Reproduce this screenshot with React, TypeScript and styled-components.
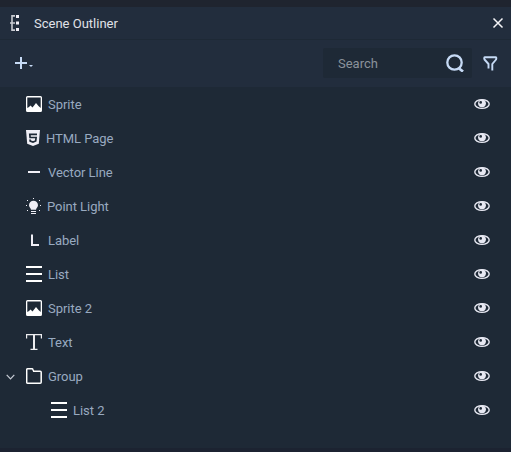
import React from "react";
import styled, { createGlobalStyle } from "styled-components";

const GlobalStyle = createGlobalStyle`
  * { box-sizing: border-box; }
  html, body { margin: 0; padding: 0; background: #1e2936; }
  body, input { font-family: Roboto, sans-serif; font-size: 13px; }
  svg { display: block; flex: none; }
`;

const Panel = styled.main`
  display: flex;
  flex-direction: column;
  width: 511px;
  height: 452px;
  border-top: 7px solid #1f242f;
  border-bottom: 4px solid #1c2331;
  background: #1e2936;
  overflow: hidden;
`;

const TitleBar = styled.header`
  display: flex;
  align-items: center;
  height: 33px;
  padding: 0 7px 0 10px;
  background: #222d3d;
  border-bottom: 1px solid #1e2936;
`;

const Title = styled.h1`
  flex: 1;
  margin: 0 0 0 15px;
  padding-top: 2px;
  font-size: 13px;
  font-weight: 400;
  line-height: 18px;
  color: #e0e2e8;
`;

const Button = styled.button`
  display: flex;
  padding: 0;
  border: 0;
  background: none;
  color: inherit;
`;

const Toolbar = styled.div`
  display: flex;
  align-items: center;
  height: 47px;
  padding: 0 13px 1px 15px;
  background: #222d3d;
  color: #c6daf5;
`;

const SearchBox = styled.label`
  display: flex;
  align-items: center;
  width: 149px;
  height: 30px;
  margin: 0 11px 0 auto;
  padding: 0 8px 0 15px;
  border-radius: 2px;
  background: #1e2936;
`;

const SearchInput = styled.input`
  flex: 1;
  min-width: 0;
  padding: 1px 0 0;
  border: 0;
  outline: 0;
  background: none;
  color: #a5b0bf;
  &::placeholder { color: #8b929b; opacity: 1; }
`;

const List = styled.ul`
  margin: 0;
  padding: 0;
  list-style: none;
`;

const Row = styled.li<{ $depth: number }>`
  display: flex;
  align-items: center;
  height: 34px;
  padding: 0 21px 0 ${(p) => p.$depth * 25}px;
  color: #f0eff6;
`;

const Toggle = styled.span`
  display: flex;
  width: 26px;
  padding: 1px 0 0 6px;
`;

const Name = styled.span<{ $gap: number }>`
  flex: 1;
  margin-left: ${(p) => p.$gap}px;
  padding-top: 2px;
  line-height: 18px;
  letter-spacing: -0.04px;
  color: #99aac0;
`;

type Kind = "image" | "html" | "line" | "light" | "label" | "list" | "text" | "folder";

const glyphs: Record<Kind, React.ReactNode> = {
  image: (
    <path
      fillRule="evenodd"
      fill="#fff"
      d="M1.500 0h13Q16 0 16 1.500v13q0 1.500-1.500 1.500h-13Q0 16 0 14.500v-13Q0 0 1.500 0zM1.300 1.500V12L3 11l1.500-1.500L6.500 11.500 10 7l2.500 3 2.200 2V1.500z"
    />
  ),
  html: (
    <>
      <path fill="currentColor" d="M0 0h14l-1.200 13.800L7 16l-5.800-2.200z" />
      <path fill="none" stroke="#1e2936" strokeWidth="1.700" d="M11 4.300H3.800l.3 3.200h6L9.700 11 7 12l-2.800-1-.2-1.500" />
    </>
  ),
  line: <path fill="currentColor" d="M2 7h12v2H2z" />,
  light: (
    <>
      <path fill="currentColor" d="M7.500 2.700a4.500 4.500 0 0 1 4.500 4.500c0 2-1.700 2.700-2 4.600H5c-.3-1.900-2-2.600-2-4.600a4.500 4.500 0 0 1 4.500-4.500zM5 13h5v1H5zM5 15h5v1H5z" />
      <path fill="currentColor" d="M7 0h1v1H7zM1 2h1v1H1zM13 2h1v1h-1zM0 7h1v1H0zM14 7h1v1h-1zM1 12h1v1H1zM13 12h1v1h-1z" />
    </>
  ),
  label: <path fill="currentColor" d="M5 2.500h2v9.500h6v2H5z" />,
  list: <path fill="#fff" d="M0 0h16v2H0zM0 7h16v2H0zM0 14h16v2H0z" />,
  text: (
    <path
      fill="#ededf0"
      d="M0 0h16v4.500h-1.200V1.300H9V14.800h2.500V16h-7v-1.200H7V1.300H1.200v3.200H0z"
    />
  ),
  folder: (
    <path
      fill="none"
      stroke="#fff"
      strokeWidth="1.500"
      d="M1.700.8H6q.7 0 .9.700L7.700 3.200h6.500q1 0 1 1v10q0 1-1 1H1.700q-1 0-1-1V1.800q0-1 1-1z"
    />
  ),
};

const KindIcon = ({ kind }: { kind: Kind }) => {
  const width = kind === "html" ? 14 : 16;
  return (
    <svg width={width} height="16" viewBox={`0 0 ${width} 16`}>
      {glyphs[kind]}
    </svg>
  );
};

const Eye = () => (
  <svg width="16" height="12" viewBox="0 0 16 12">
    <ellipse cx="8" cy="6" rx="7.200" ry="4.400" fill="#1e2936" stroke="#e7e8f2" strokeWidth="1.400" />
    <circle cx="8" cy="5.300" r="3.900" fill="#e7e8f2" />
    <circle cx="6.700" cy="4.400" r="1.300" fill="#1e2936" />
  </svg>
);

const items: { name: string; kind: Kind; gap?: number; depth?: number; open?: boolean }[] = [
  { name: "Sprite", kind: "image" },
  { name: "HTML Page", kind: "html" },
  { name: "Vector Line", kind: "line" },
  { name: "Point Light", kind: "light", gap: 5 },
  { name: "Label", kind: "label" },
  { name: "List", kind: "list" },
  { name: "Sprite 2", kind: "image" },
  { name: "Text", kind: "text" },
  { name: "Group", kind: "folder", open: true },
  { name: "List 2", kind: "list", depth: 1 },
];

export default function App() {
  return (
    <>
      <GlobalStyle />
      <Panel>
        <TitleBar>
          <svg width="9" height="16" viewBox="0 0 9 16">
            <path fill="none" stroke="#c9cbd2" strokeWidth="1.600" d="M5 .9H2v14.200h3M0 8h5" />
            <path fill="#f2f0f7" d="M6 0h3v3H6zM6 6.500h3v3H6zM6 13h3v3H6z" />
          </svg>
          <Title>Scene Outliner</Title>
          <Button aria-label="Close">
            <svg width="12" height="12" viewBox="0 0 12 12">
              <path stroke="#f5f5f8" strokeWidth="1.500" d="M1.500 1.500l9 9M10.500 1.500l-9 9" />
            </svg>
          </Button>
        </TitleBar>
        <Toolbar>
          <Button aria-label="Add">
            <svg width="18" height="12" viewBox="0 0 18 12">
              <path fill="currentColor" d="M5 0h2v5h5v2H7v5H5V7H0V5h5zM14 8h4l-2 2z" />
            </svg>
          </Button>
          <SearchBox>
            <SearchInput placeholder="Search" />
            <svg width="18" height="18" viewBox="0 0 18 18">
              <circle cx="8.500" cy="8.500" r="7.200" fill="none" stroke="currentColor" strokeWidth="2.300" />
              <path stroke="currentColor" strokeWidth="2.800" d="M12.500 14l4.500 3.500" />
            </svg>
          </SearchBox>
          <Button aria-label="Filter">
            <svg width="15" height="15" viewBox="0 0 15 15">
              <path
                fill="none"
                stroke="currentColor"
                strokeWidth="1.900"
                strokeLinejoin="round"
                d="M5.500 12.500V8L1.500 3.500Q.7 1.300 2 1.300h10.500q1.300 0 .6 2.200L9.300 8v6.500"
              />
            </svg>
          </Button>
        </Toolbar>
        <List>
          {items.map(({ name, kind, gap = 6, depth = 0, open }) => (
            <Row key={name} $depth={depth}>
              <Toggle>
                {open && (
                  <svg width="9" height="6" viewBox="0 0 9 6">
                    <path fill="none" stroke="#c7ccd5" strokeWidth="1.200" d="M.7.8l3.800 4 3.800-4" />
                  </svg>
                )}
              </Toggle>
              <KindIcon kind={kind} />
              <Name $gap={gap}>{name}</Name>
              <Eye />
            </Row>
          ))}
        </List>
      </Panel>
    </>
  );
}
